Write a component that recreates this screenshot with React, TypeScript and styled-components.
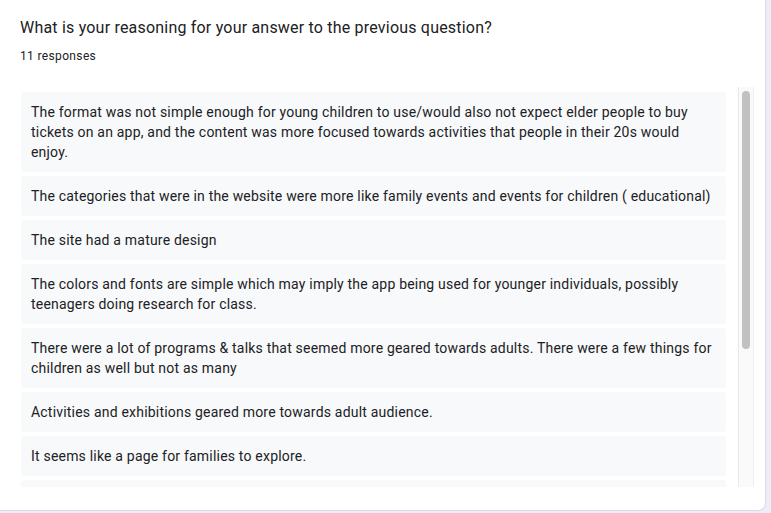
import { createGlobalStyle, styled } from "styled-components";

const GlobalStyle = createGlobalStyle`
  html, body {
    margin: 0;
    padding: 0;
    background: #f0ebf8;
  }
  body {
    font-family: Roboto, "Liberation Sans", Arial, sans-serif;
    color: #202124;
  }
`;

const Card = styled.div`
  box-sizing: border-box;
  width: 766px;
  background: #ffffff;
  border-right: 1px solid #dadce0;
  border-bottom: 1px solid #dadce0;
  border-radius: 0 0 8px 0;
  padding: 16px 11px 23px 20px;
`;

const Title = styled.div`
  font-size: 16px;
  line-height: 24px;
  letter-spacing: 0.2px;
  color: #202124;
`;

const Count = styled.div`
  margin-top: 8px;
  font-size: 12px;
  line-height: 16px;
  letter-spacing: 0.35px;
  color: #202124;
`;

const ListArea = styled.div`
  margin: 23px 0 0 1px;
  height: 400px;
  display: flex;
  gap: 12px;
`;

const ResponseList = styled.div`
  flex: 1;
  overflow: hidden;
  padding-top: 5px;
  display: flex;
  flex-direction: column;
  gap: 4px;
`;

const Response = styled.div`
  flex-shrink: 0;
  background: #f8f9fa;
  border-radius: 4px;
  padding: 10px;
  font-size: 14px;
  line-height: 20px;
  letter-spacing: 0.2px;
  color: #202124;
`;

const ScrollTrack = styled.div`
  box-sizing: border-box;
  width: 16px;
  height: 100%;
  background: #fafafa;
  border-left: 1px solid #e8e8e8;
  border-right: 1px solid #efefef;
  padding: 4px 3px;
`;

const ScrollThumb = styled.div<{ $size: number }>`
  height: ${(props) => props.$size}px;
  border-radius: 4px;
  background: #c1c1c1;
`;

const responses = [
  "The format was not simple enough for young children to use/would also not expect elder people to buy tickets on an app, and the content was more focused towards activities that people in their 20s would enjoy.",
  "The categories that were in the website were more like family events and events for children ( educational)",
  "The site had a mature design",
  "The colors and fonts are simple which may imply the app being used for younger individuals, possibly teenagers doing research for class.",
  "There were a lot of programs & talks that seemed more geared towards adults. There were a few things for children as well but not as many",
  "Activities and exhibitions geared more towards adult audience.",
  "It seems like a page for families to explore.",
  "The website seemed geared towards adults but had some sections for kids and families, like the family events and workshops.",
  "It looked like it was designed for adults.",
  "The layout and language used seemed to be directed at older audiences, such as college students and adults who are interested in art.",
  "Mostly adults.",
];

export default function App() {
  return (
    <>
      <GlobalStyle />
      <Card>
        <Title>What is your reasoning for your answer to the previous question?</Title>
        <Count>{responses.length} responses</Count>
        <ListArea>
          <ResponseList>
            {responses.map((text, i) => (
              <Response key={i}>{text}</Response>
            ))}
          </ResponseList>
          <ScrollTrack>
            <ScrollThumb $size={258} />
          </ScrollTrack>
        </ListArea>
      </Card>
    </>
  );
}
